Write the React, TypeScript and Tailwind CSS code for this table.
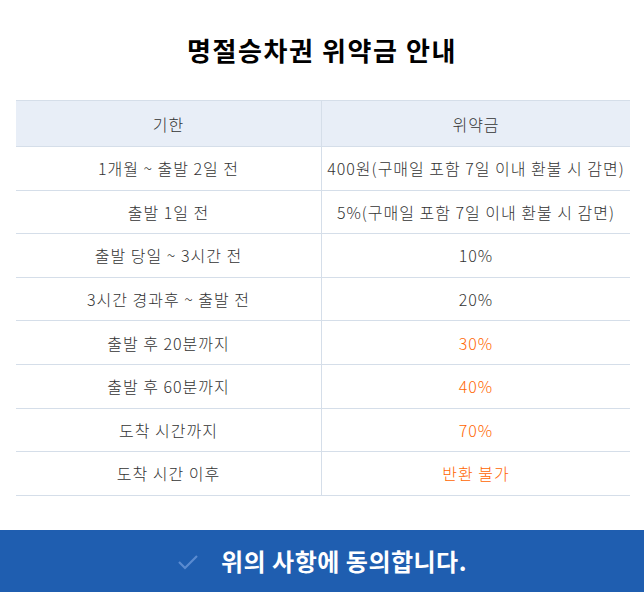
import React from "react";

const rows: { a: string; b: string; orange?: boolean }[] = [
  { a: "1개월 ~ 출발 2일 전", b: "400원(구매일 포함 7일 이내 환불 시 감면)" },
  { a: "출발 1일 전", b: "5%(구매일 포함 7일 이내 환불 시 감면)" },
  { a: "출발 당일 ~ 3시간 전", b: "10%" },
  { a: "3시간 경과후 ~ 출발 전", b: "20%" },
  { a: "출발 후 20분까지", b: "30%", orange: true },
  { a: "출발 후 60분까지", b: "40%", orange: true },
  { a: "도착 시간까지", b: "70%", orange: true },
  { a: "도착 시간 이후", b: "반환 불가", orange: true },
];

export default function App() {
  return (
    <div
      className="w-[644px] h-[592px] bg-white flex flex-col overflow-hidden"
      style={{ fontFamily: '"Noto Sans CJK KR", "Noto Sans", sans-serif' }}
    >
      <h1 className="h-[100px] pt-[28px] text-center text-[26px] font-bold text-black leading-[44px] tracking-[1.6px]">
        명절승차권 위약금 안내
      </h1>
      <div className="ml-[16px] mr-[14px] border-t border-[#d5dee9]">
        <div className="grid grid-cols-[306px_1fr] h-[46px] bg-[#e8eef7] border-b border-[#d5dee9] text-[16px] font-light text-[#333] tracking-[1px]">
          <div className="flex items-center justify-center border-r border-[#d5dee9]">기한</div>
          <div className="flex items-center justify-center">위약금</div>
        </div>
        {rows.map((r, i) => (
          <div
            key={i}
            className="grid grid-cols-[306px_1fr] h-[43.6px] border-b border-[#d5dee9] text-[16px] font-light text-[#333] tracking-[1px]"
          >
            <div className="flex items-center justify-center border-r border-[#d5dee9]">{r.a}</div>
            <div className={`flex items-center justify-center ${r.orange ? "text-[#ff6600]" : ""}`}>{r.b}</div>
          </div>
        ))}
      </div>
      <div className="mt-auto h-[62px] bg-[#1f5eb0] flex items-center justify-center gap-[22px]">
        <svg width="22" height="16" viewBox="0 0 22 16" className="mt-[2px]">
          <path d="M2 8 L8 14 L20 2" fill="none" stroke="#5a8bd0" strokeWidth="2.2" />
        </svg>
        <span className="text-white font-bold text-[24px] tracking-[0.5px]">위의 사항에 동의합니다.</span>
      </div>
    </div>
  );
}
